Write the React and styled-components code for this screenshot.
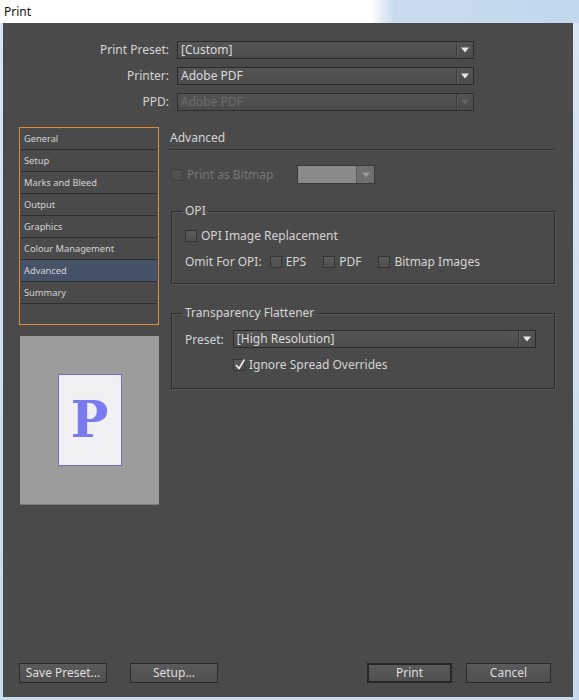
import React from "react";
import styled, { createGlobalStyle } from "styled-components";

const Global = createGlobalStyle`
  html, body { margin: 0; padding: 0; background: #ffffff; }
  body { width: 579px; height: 700px; overflow: hidden; font-family: "Noto Sans", "Liberation Sans", sans-serif; }
  * { box-sizing: border-box; }
`;

const Window = styled.div`
  width: 579px;
  height: 700px;
  display: flex;
  flex-direction: column;
  background: linear-gradient(90deg, #ffffff 0%, #ffffff 64%, #c9dcef 68%, #c3d7ec 100%);
`;

const TitleBar = styled.div`
  height: 23px;
  display: flex;
  align-items: center;
  padding-left: 4px;
  font-size: 12px;
  color: #111;
`;

const Frame = styled.div`
  flex: 1;
  display: flex;
  padding: 0 6px 3px 3px;
  background: linear-gradient(180deg, #d8e6f3 0%, #c7daed 100%);
`;

const Dialog = styled.div`
  flex: 1;
  background: #4a4a4a;
  display: flex;
  flex-direction: column;
  padding: 18px 17px 14px 16px;
  color: #d4d4d4;
  font-size: 12px;
`;

const TopForm = styled.div`
  display: grid;
  grid-template-columns: 150px 297px;
  column-gap: 8px;
  row-gap: 8px;
  align-items: center;
`;

const FormLabel = styled.div`
  text-align: right;
  color: ${(p) => (p.disabled ? "#bdbdbd" : "#d4d4d4")};
  line-height: 18px;
`;

const SelectBox = styled.div`
  height: 18px;
  display: flex;
  align-items: stretch;
  border: 1px solid #2b2b2b;
  background: linear-gradient(180deg, #555555 0%, #4c4c4c 100%);
  color: ${(p) => (p.disabled ? "#737373" : "#dcdcdc")};
  opacity: ${(p) => (p.disabled ? 0.85 : 1)};
  width: ${(p) => p.width || "auto"};
`;

const SelectText = styled.div`
  flex: 1;
  padding-left: 3px;
  line-height: 16px;
  white-space: nowrap;
  overflow: hidden;
`;

const SelectArrow = styled.div`
  width: 17px;
  border-left: 1px solid #3a3a3a;
  box-shadow: inset 1px 0 0 #5e5e5e;
  display: flex;
  align-items: center;
  justify-content: center;
`;

const Arrow = ({ color = "#e6e6e6" }) => (
  <svg width="8" height="6" viewBox="0 0 8 6">
    <path d="M0 0.5 L8 0.5 L4 5.5 Z" fill={color} />
  </svg>
);

const Main = styled.div`
  flex: 1;
  display: flex;
  gap: 10px;
  margin-top: 16px;
`;

const LeftCol = styled.div`
  width: 140px;
  display: flex;
  flex-direction: column;
  gap: 11px;
`;

const NavList = styled.div`
  height: 198px;
  border: 1px solid #df8b33;
  padding: 0 1px;
  display: flex;
  flex-direction: column;
`;

const NavItem = styled.div`
  height: 22px;
  flex-shrink: 0;
  line-height: 21px;
  font-size: 9.3px;
  padding-left: 3px;
  color: #d4d4d4;
  border-bottom: 1px solid #2f2f2f;
  background: ${(p) => (p.active ? "#465268" : "transparent")};
`;

const Preview = styled.div`
  width: 139px;
  height: 169px;
  margin-left: 1px;
  background: #9c9c9c;
  border-bottom: 1px solid #7a7a7a;
  display: flex;
  align-items: center;
  justify-content: center;
`;

const PageSheet = styled.div`
  width: 64px;
  height: 92px;
  background: #f1f1f4;
  border: 1px solid #6e6ed6;
  display: flex;
  align-items: center;
  justify-content: center;
  font-family: "DejaVu Serif", "Liberation Serif", serif;
  font-size: 50px;
  font-weight: bold;
  color: #7b7bf0;
  padding-bottom: 2px;
`;

const RightCol = styled.div`
  flex: 1;
  display: flex;
  flex-direction: column;
`;

const SectionHeading = styled.div`
  height: 23px;
  line-height: 21px;
  padding-left: 1px;
  border-bottom: 1px solid #333333;
  box-shadow: 0 1px 0 #555555;
`;

const Row = styled.div`
  display: flex;
  align-items: center;
  gap: ${(p) => p.gap || "0px"};
  margin-top: ${(p) => p.mt || "0px"};
  margin-left: ${(p) => p.ml || "0px"};
`;

const Caption = styled.span`
  margin-right: ${(p) => p.mr || "0px"};
  white-space: nowrap;
`;

const CheckLabel = styled.label`
  display: flex;
  align-items: center;
  gap: 4px;
  color: ${(p) => (p.disabled ? "#767676" : "#d4d4d4")};
  margin-right: ${(p) => p.mr || "0px"};
  white-space: nowrap;
`;

const Box = styled.span`
  width: 12px;
  height: 12px;
  border: 1px solid #363636;
  background: linear-gradient(180deg, #5a5a5a, #505050);
  opacity: ${(p) => (p.disabled ? 0.55 : 1)};
  position: relative;
  display: inline-block;
  flex-shrink: 0;
`;

const Tick = styled.svg`
  position: absolute;
  left: 0;
  top: -2px;
`;

const Check = ({ checked, disabled }) => (
  <Box disabled={disabled}>
    {checked && (
      <Tick width="12" height="13" viewBox="0 0 12 13">
        <path d="M2 7 L5 10.5 L10.5 1.5" stroke="#f0f0f0" strokeWidth="1.6" fill="none" />
      </Tick>
    )}
  </Box>
);

const DisabledSelect = styled.div`
  width: 78px;
  height: 19px;
  border: 1px solid #393939;
  background: #8a8a8a;
  display: flex;
  margin-left: 24px;
`;

const DisabledSelectBody = styled.div`
  flex: 1;
`;

const DisabledArrow = styled.div`
  width: 18px;
  background: #6f6f6f;
  border-left: 1px solid #5a5a5a;
  display: flex;
  align-items: center;
  justify-content: center;
`;

const Group = styled.fieldset`
  flex-shrink: 0;
  min-height: 0;
  margin: ${(p) => p.mt || "0px"} 1px 0 2px;
  padding: 0 0 0 13px;
  border: 1px solid #2e2e2e;
  box-shadow: 1px 1px 0 #565656, inset 1px 1px 0 #565656;
  height: ${(p) => p.h};
  min-width: 0;
`;

const Legend = styled.legend`
  margin-left: -3px;
  padding: 0 3px;
  line-height: 14px;
  color: #d4d4d4;
`;

const Footer = styled.div`
  display: flex;
  align-items: center;
  padding-right: 5px;
`;

const Button = styled.button`
  width: ${(p) => p.w};
  height: 20px;
  margin-left: ${(p) => p.ml || "0px"};
  background: linear-gradient(180deg, #5a5a5a 0%, #4f4f4f 100%);
  border: ${(p) => (p.primary ? "2px solid #262626" : "1px solid #2b2b2b")};
  color: #dedede;
  font-family: "Noto Sans", "Liberation Sans", sans-serif;
  font-size: 12px;
  padding: 0;
  line-height: 16px;
`;

const Spacer = styled.div`
  flex: 1;
`;

const navItems = [
  "General",
  "Setup",
  "Marks and Bleed",
  "Output",
  "Graphics",
  "Colour Management",
  "Advanced",
  "Summary",
];

export default function App() {
  return (
    <>
      <Global />
      <Window>
        <TitleBar>Print</TitleBar>
        <Frame>
          <Dialog>
            <TopForm>
              <FormLabel>Print Preset:</FormLabel>
              <SelectBox>
                <SelectText>[Custom]</SelectText>
                <SelectArrow><Arrow /></SelectArrow>
              </SelectBox>
              <FormLabel>Printer:</FormLabel>
              <SelectBox>
                <SelectText>Adobe PDF</SelectText>
                <SelectArrow><Arrow /></SelectArrow>
              </SelectBox>
              <FormLabel>PPD:</FormLabel>
              <SelectBox disabled>
                <SelectText>Adobe PDF</SelectText>
                <SelectArrow><Arrow color="#6c6c6c" /></SelectArrow>
              </SelectBox>
            </TopForm>

            <Main>
              <LeftCol>
                <NavList>
                  {navItems.map((n) => (
                    <NavItem key={n} active={n === "Advanced"}>{n}</NavItem>
                  ))}
                </NavList>
                <Preview>
                  <PageSheet>P</PageSheet>
                </Preview>
              </LeftCol>

              <RightCol>
                <SectionHeading>Advanced</SectionHeading>
                <Row mt="15px" ml="2px">
                  <CheckLabel disabled>
                    <Check disabled />
                    Print as Bitmap
                  </CheckLabel>
                  <DisabledSelect>
                    <DisabledSelectBody />
                    <DisabledArrow><Arrow color="#9a9a9a" /></DisabledArrow>
                  </DisabledSelect>
                </Row>

                <Group mt="20px" h="80px">
                  <Legend>OPI</Legend>
                  <Row mt="9px">
                    <CheckLabel>
                      <Check />
                      OPI Image Replacement
                    </CheckLabel>
                  </Row>
                  <Row mt="9px" gap="5px">
                    <Caption mr="3px">Omit For OPI:</Caption>
                    <CheckLabel mr="12px"><Check />EPS</CheckLabel>
                    <CheckLabel mr="12px"><Check />PDF</CheckLabel>
                    <CheckLabel><Check />Bitmap Images</CheckLabel>
                  </Row>
                </Group>

                <Group mt="22px" h="83px">
                  <Legend>Transparency Flattener</Legend>
                  <Row mt="10px" gap="9px">
                    <Caption>Preset:</Caption>
                    <SelectBox width="303px">
                      <SelectText>[High Resolution]</SelectText>
                      <SelectArrow><Arrow /></SelectArrow>
                    </SelectBox>
                  </Row>
                  <Row mt="8px" ml="48px">
                    <CheckLabel>
                      <Check checked />
                      Ignore Spread Overrides
                    </CheckLabel>
                  </Row>
                </Group>
              </RightCol>
            </Main>

            <Footer>
              <Button w="88px">Save Preset...</Button>
              <Button w="88px" ml="23px">Setup...</Button>
              <Spacer />
              <Button w="85px" primary>Print</Button>
              <Button w="85px" ml="14px">Cancel</Button>
            </Footer>
          </Dialog>
        </Frame>
      </Window>
    </>
  );
}
